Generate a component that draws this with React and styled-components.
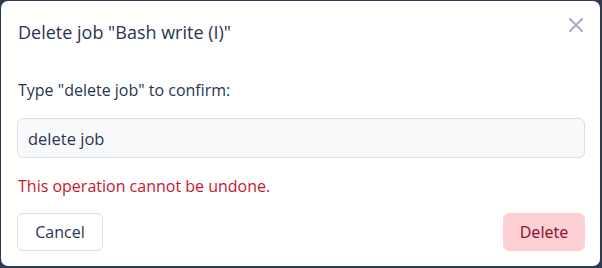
import React from "react";
import styled, { createGlobalStyle } from "styled-components";

const Global = createGlobalStyle`
  html, body { margin: 0; padding: 0; background: #2c3a52; }
  body { font-family: "Open Sans", "Noto Sans", sans-serif; }
  * { box-sizing: border-box; }
`;

const Backdrop = styled.div`
  width: 602px;
  height: 268px;
  padding: 1px 2px 2px 1px;
  background: #2c3a52;
`;

const Dialog = styled.div`
  width: 599px;
  height: 265px;
  background: #ffffff;
  border-radius: 7px;
  display: flex;
  flex-direction: column;
  padding: 0 16px 0 16px;
`;

const Header = styled.div`
  display: flex;
  align-items: center;
  justify-content: space-between;
  height: 62px;
  padding-left: 1px;
`;

const Title = styled.h2`
  margin: 0;
  font-size: 18px;
  font-weight: 400;
  color: #2a3650;
`;

const Close = styled.button`
  border: none;
  background: none;
  padding: 0;
  width: 16px;
  height: 16px;
  display: flex;
  align-items: center;
  justify-content: center;
  margin-top: -14px;
  margin-right: 0;
  cursor: pointer;
`;

const Label = styled.label`
  display: block;
  margin-top: 16px;
  padding-left: 1px;
  font-size: 16px;
  font-weight: 500;
  color: #2a3650;
`;

const Input = styled.input`
  margin-top: 17px;
  width: 568px;
  height: 40px;
  border: 1px solid #dcdfe5;
  border-radius: 6px;
  background: #f8f9fb;
  padding: 0 10px;
  font-family: inherit;
  font-size: 16.5px;
  color: #2a3650;
  outline: none;
`;

const ErrorText = styled.p`
  margin: 17px 0 0;
  padding-left: 1px;
  font-size: 16px;
  color: #c8162e;
`;

const Footer = styled.div`
  display: flex;
  justify-content: space-between;
  width: 568px;
  margin-top: 16px;
`;

const Button = styled.button`
  height: 38px;
  width: ${(p) => p.$w}px;
  padding: 0;
  border-radius: 6px;
  font-size: 16px;
  cursor: pointer;
  border: 1px solid ${(p) => (p.$danger ? "#fdd0d6" : "#dcdfe5")};
  background: ${(p) => (p.$danger ? "#fdd0d6" : "#ffffff")};
  color: ${(p) => (p.$danger ? "#8e1730" : "#2a3650")};
  font-family: ${(p) => (p.$danger ? '"Noto Sans", sans-serif' : "inherit")};
`;

export default function App() {
  return (
    <Backdrop>
      <Global />
      <Dialog>
        <Header>
          <Title>Delete job "Bash write (I)"</Title>
          <Close aria-label="Close">
            <svg width="14" height="14" viewBox="0 0 14 14">
              <path d="M1 1L13 13M13 1L1 13" stroke="#a3acba" strokeWidth="1.8" strokeLinecap="round" />
            </svg>
          </Close>
        </Header>
        <Label>Type "delete job" to confirm:</Label>
        <Input defaultValue="delete job" />
        <ErrorText>This operation cannot be undone.</ErrorText>
        <Footer>
          <Button $w={86}>Cancel</Button>
          <Button $danger $w={82}>Delete</Button>
        </Footer>
      </Dialog>
    </Backdrop>
  );
}
